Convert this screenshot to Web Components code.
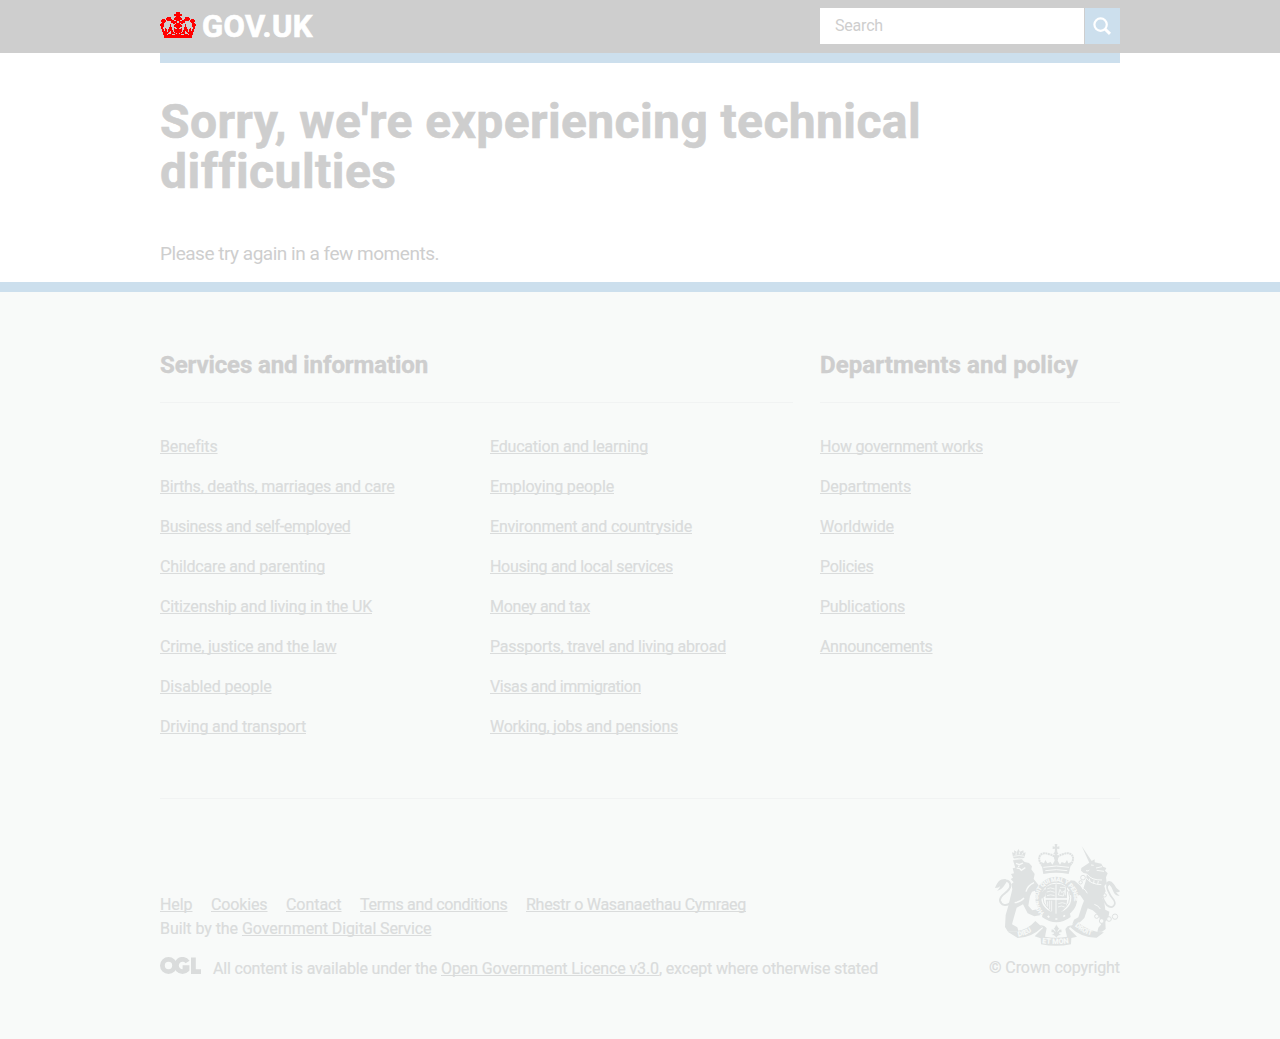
<!DOCTYPE html>
<html lang="en">
<head>
<meta charset="utf-8">
<title>Sorry, we're experiencing technical difficulties - GOV.UK</title>
<style>
body{margin:0;background:#f8faf9;font-family:Roboto,"Liberation Sans",sans-serif;color:#cecece}
</style>
</head>
<body>
<gov-header></gov-header>
<gov-main>
  <text-run slot="title" w="761">Sorry, we're experiencing technical</text-run>
  <text-run slot="title" w="234">difficulties</text-run>
  <text-run slot="body" w="279">Please try again in a few moments.</text-run>
</gov-main>
<gov-footer></gov-footer>

<script>
const make = (name, html, ready) => customElements.define(name, class extends HTMLElement {
  constructor() {
    super();
    this.attachShadow({mode: 'open'}).innerHTML = html.trim();
  }
  connectedCallback() { if (ready) ready.call(this); }
});

make('crown-logo', `
<style>:host{display:block;width:36px;height:27px}svg{display:block}</style>
<svg width="36" height="27" shape-rendering="crispEdges"></svg>`, function () {
  const half = [
    '................##',
    '................##',
    '..............####',
    '..............####',
    '................##',
    '.......####....###',
    '......#####...####',
    '..###.######..####',
    '.#####.#######..##',
    '.#####.....######.',
    '..###......######.',
    '.###.........##.##',
    '####......#....###',
    '####......#...####',
    '.###......#...####',
    '.##......###....##',
    '.##..#...###..#..#',
    '..##.##.####..####',
    '..##.##.#####.####',
    '..#####.##.##.####',
    '...######..###.###',
    '...#####...#####.#',
    '...####.####...###',
    '....##############',
    '....##############',
    '....##############'];
  let d = '';
  half.forEach((row, y) => [...(row + [...row].reverse().join(''))].forEach((c, x) => {
    if (c === '#') d += `M${x} ${y}h1v1h-1z`;
  }));
  this.shadowRoot.querySelector('svg').innerHTML = `<path fill="#f00" d="${d}"/>`;
});

make('search-box', `
<style>
:host{display:flex;width:300px;height:36px}
.field{width:264px;background:#fff;box-sizing:border-box;padding:8px 15px;font-size:16px;line-height:20px;margin-right:1px}
.go{flex:1;background:#ccdfed}
svg{display:block}
</style>
<div class="field"><text-run w="48">Search</text-run></div>
<div class="go"><svg width="35" height="36" fill="none" stroke="#fff"><circle cx="15.6" cy="16.6" r="6.2" stroke-width="2.2"/><path d="M20 21l5 4.8" stroke-width="3"/></svg></div>`);

make('gov-header', `
<style>
:host{display:block;height:53px;background:#cecece}
.in{width:960px;margin:auto;display:flex;justify-content:space-between}
.logo{display:flex;padding-top:12px;gap:6px;color:#fff}
.name{font-size:31px;line-height:30px;font-weight:700;-webkit-text-stroke:.7px #fff}
search-box{margin-top:8px}
</style>
<div class="in"><div class="logo"><crown-logo></crown-logo><span class="name"><text-run w="111">GOV.UK</text-run></span></div><search-box></search-box></div>`);

make('gov-main', `
<style>
:host{display:block;background:#fff;height:229px}
.in{width:960px;margin:auto}
.bar{height:10px;background:#ccdfed}
h1{margin:34px 0 0;font-size:48px;line-height:50px;font-weight:700;-webkit-text-stroke:.6px #cecece;display:flex;flex-direction:column;align-items:flex-start}
p{margin:44px 0 0;font-size:19px;line-height:25px}
</style>
<div class="in"><div class="bar"></div><h1><slot name="title"></slot></h1><p><slot name="body"></slot></p></div>`);

make('link-group', `
<style>
:host{display:block}
h2{margin:0;font-size:24px;line-height:30px;font-weight:700;-webkit-text-stroke:.4px #cecece;padding-bottom:22px;border-bottom:1px solid #f1f3f3}
.cols{display:flex;padding-top:34px}
ul{list-style:none;margin:0;padding:0;flex:none;width:330px;display:flex;flex-direction:column;gap:20px;color:#dadcdc;-webkit-text-stroke:.2px #dadcdc}
li{font-size:16px;line-height:20px}
</style>
<h2></h2><div class="cols"></div>`, function () {
  const groups = {
    services: ['Services and information', 268, [
      [['Benefits', 57], ['Births, deaths, marriages and care', 234.5], ['Business and self-employed', 190.5], ['Childcare and parenting', 165], ['Citizenship and living in the UK', 212], ['Crime, justice and the law', 176.5], ['Disabled people', 111.5], ['Driving and transport', 146]],
      [['Education and learning', 158], ['Employing people', 124], ['Environment and countryside', 202], ['Housing and local services', 183], ['Money and tax', 100], ['Passports, travel and living abroad', 236], ['Visas and immigration', 151], ['Working, jobs and pensions', 188]]]],
    departments: ['Departments and policy', 258, [
      [['How government works', 163], ['Departments', 91], ['Worldwide', 74], ['Policies', 53.5], ['Publications', 85], ['Announcements', 112.5]]]]
  };
  const [title, w, cols] = groups[this.getAttribute('kind')];
  this.shadowRoot.querySelector('h2').innerHTML = `<text-run w="${w}">${title}</text-run>`;
  this.shadowRoot.querySelector('.cols').innerHTML = cols.map(c =>
    `<ul>${c.map(([t, x]) => `<li><text-run link w="${x}">${t}</text-run></li>`).join('')}</ul>`).join('');
});

make('ogl-logo', `
<style>:host{display:block;width:41px;height:17px}svg{display:block}</style>
<svg width="41" height="17" fill="none" stroke="#dadcdc" stroke-width="4.8"><circle cx="8.5" cy="8.5" r="6.1"/><path d="M27.6 5A6.1 6.1 0 1 0 27 12.6V10.6H22.6"/><path d="M33.4 .5V14.6H41"/></svg>`);

make('royal-arms', `
<style>:host{display:block;width:125px;height:102px}svg{display:block;font-family:Roboto,sans-serif;font-weight:700}</style>
<svg width="125" height="102" viewBox="45 27 375 306">
<defs>
<path id="motto-arc" d="M192 233A54 54 0 1 1 268 230"/>
<path id="dieu-arc" d="M115 304Q146 300 172 274"/><path id="mon-arc" d="M186 324Q229 331 272 323"/><path id="droit-arc" d="M284 273Q312 299 350 304"/>
</defs>
<g fill="#dfe2e2" stroke="#dfe2e2" stroke-width="0">
<path d="M224 27h8l-1 8 7-1v8l-7-1 1 10 3 5-7 5-8-5 4-5 1-10-7 1v-8l7 1z"/>
<path fill="none" stroke-width="6" stroke-dasharray="6 1.5" d="M188 93C165 67 184 48 205 57Q222 60 228 72Q235 60 252 57C274 48 291 67 269 93"/>
<path d="M186 95l-3-14 9 4 4-10 6 10 10-4 5 8 7-12-3-15 7-4 8 4-3 15 7 12 5-8 10 4 6-10 4 10 9-4-3 14-5 22q-38-8-76 0z"/>
<path fill="none" stroke="#f8faf9" stroke-width="3" d="M190 97q39-8 77 0M196 107q33-6 66 0"/>
<circle cx="229" cy="188" r="40" fill="none" stroke-width="3"/>
<circle cx="229" cy="188" r="54" fill="none" stroke-width="18"/>
<path d="M197 156q32-20 64 0v35H197z"/><path d="M197 194h64c0 24-12 36-32 44-20-8-32-20-32-44z"/>
<path d="M192 216q37 40 74 0l6 30q-43 32-86 0z"/>
<g fill="none" stroke="#f8faf9" stroke-width="3"><path d="M228 148v88M192 191h74"/><path stroke-width="2.4" d="M202 161q8-5 22 1m-24 9q11-6 24 1m-23 10q10-5 23 0M235 206q12-6 22 0m-23 10q11-6 20 0M235 180l5-17 5 10 9-6-4 16zM203 199v16m6-18v26m6-26v32M240 157h16v24"/><path d="M203 243l5 4m18 5h6m18-7 5-4" stroke-width="5"/></g>
<path d="M99 66l-3-14 7 2-1-8 9 5 4-9 5 8 10-4 1 8 6-2-3 15-7 6H103z"/>
<path fill="none" stroke="#f8faf9" stroke-width="2.5" d="M100 64q18-5 34 0M108 60l1-8m9 6v-8m8 9 3-6M101 72q17-4 31-1"/>
<path d="M101 76l26-3 9 8 13 3 9 10-2 9 10 14-3 15 14 17 3 15 9 7 6-8 6 4-3 16-11 8-17-10-3-14-9 3-6 13-5 29 12 14 18-4 10 8 2 9-24 5-20-9-14-27-19 10-8 28-6 22 16 9 3 11-31 2-9-14 2-36 8-28 12-49-3-16 7-5-9-10 7-4-6-11 9-2-4-15 8-2z" transform="translate(-2 0)"/>
<path fill="none" stroke="#f8faf9" stroke-width="4" d="M108 85l10 4 11-5m-19 16q9-2 14 6l12-8m-20-6v4M162 143q-19 8-24 27M104 203q18-2 28-14"/>
<path fill="none" stroke-width="6" d="M91 204C78 216 63 209 60 197C57 178 91 172 91 152C91 136 74 132 65 142"/>
<path d="M76 132c-18 0-24 10-31 27 8 0 13-2 16-6-3 7-5 10-10 14 15-2 23-16 30-29z"/>
<path d="M305 33l34 51-8 6z"/>
<path d="M336 77l8-4 0 9 20 4 5 9 10 4-4 8 8 8-5 12 2 18-7 8 4 16-11 19 7 14 3 22 12 6-3 20-9 10 1 22-11 8-14 1 3-13 8-9-6-27-19-16-15-6-10 29-13 13-23 5 5-13 13-7 11-35 6-15-12-17-12 4-18-4-4-12 17 3 8-7-17-9-9 3-8-8 9-4 6-10 12 1 17 15 8 12 8-25 4-23-10-2-8-7 1-8 17-11z"/>
<path fill="none" stroke="#f8faf9" stroke-width="3" d="M322 118q12 18 44 17M318 128q13 20 46 21M333 90l8 1m-13 14q-3 5-10 2M348 99l18-4m-16 11 22 3M328 131l2 8m12-3-1 10m14-8-2 10M306 158q12 6 16 17M343 208q12 3 18 14"/>
<path fill="none" stroke-width="5" d="M366 181q5 17 14 29c18 15 29-2 22-14C389 180 371 151 388 141"/>
<path d="M378 144q11-14 24 4 5 12 18 20-3 6-12 3 5 7 11 11-14 2-20-15-5-14-11-18l-6 8z"/>
<g fill="#f8faf9" stroke-width="3"><circle cx="350" cy="244" r="6"/><circle cx="365" cy="258" r="7"/><circle cx="387" cy="252" r="7"/><circle cx="405" cy="245" r="8"/><circle cx="309" cy="128" r="7"/><circle cx="302" cy="142" r="5"/><circle cx="374" cy="181" r="5"/></g>
<path d="M101 289Q140 288 166 258L187 277Q153 309 113 309L83 290z"/>
<path d="M372 292Q330 293 288 258L270 276Q304 309 350 308z"/>
<path d="M164 304l25-25q-2-7-13-5 13-8 24 6l-5 25q32 6 66 0l-5-23q11-16 24-7-11-3-13 6l24 24-17 4-1 19q-45 9-90 0l-1-18z"/>
<path stroke="#f8faf9" stroke-width="2" d="M229 268l9 13-5 8q13-15 13 3l-9 2 7 5-10 4-5 7-5-7-10-4 8-5-9-2q0-18 13-3l-5-8z"/>
</g>
<g fill="#f8faf9" stroke="#f8faf9" stroke-width=".5" font-size="18"><text letter-spacing="-.8"><textPath href="#motto-arc">HONI SOIT QUI MAL Y PENSE</textPath></text>
<text font-size="20"><textPath href="#dieu-arc">DIEU</textPath></text><text font-size="22"><textPath href="#mon-arc">ET MON</textPath></text><text font-size="20"><textPath href="#droit-arc">DROIT</textPath></text></g>
</svg>`);

make('footer-meta', `
<style>
:host{display:flex;justify-content:space-between;align-items:flex-start;font-size:16px;line-height:24px;color:#dadcdc;-webkit-text-stroke:.2px #dadcdc}
.info{padding-top:49px}
.links{display:flex;gap:18.5px}
.row{display:flex;padding-top:16px;gap:12px}
.crest{display:flex;flex-direction:column;align-items:flex-end;gap:10px}
</style>
<div class="info">
<div class="links"><text-run link w="32.5">Help</text-run><text-run link w="56.5">Cookies</text-run><text-run link w="55.5">Contact</text-run><text-run link w="147.5">Terms and conditions</text-run><text-run link w="220">Rhestr o Wasanaethau Cymraeg</text-run></div>
<div><text-run w="78">Built by the</text-run> <text-run link w="189.5">Government Digital Service</text-run></div>
<div class="row"><ogl-logo></ogl-logo><div><text-run w="224">All content is available under the</text-run> <text-run link w="218">Open Government Licence v3.0</text-run><text-run w="219">, except where otherwise stated</text-run></div></div>
</div>
<div class="crest"><royal-arms></royal-arms><text-run w="131">© Crown copyright</text-run></div>`);

make('gov-footer', `
<style>
:host{display:block;border-top:10px solid #ccdfed;height:747px;background:#f8faf9}
.in{width:960px;margin:auto;padding-top:58px}
.top{display:flex;gap:27px;height:448px;border-bottom:1px solid #f1f3f3}
.a{width:633px}.b{width:300px}
footer-meta{padding-top:45px}
</style>
<div class="in"><div class="top"><link-group class="a" kind="services"></link-group><link-group class="b" kind="departments"></link-group></div><footer-meta></footer-meta></div>`);

/* A run of text tracked so that it fills the width given in "w". */
make('text-run', `
<style>
:host{display:inline;white-space:nowrap}
:host([link]) span{text-decoration:underline 1px;text-underline-offset:1px;text-decoration-skip-ink:none}
</style><span><slot></slot></span>`, function () {
  const span = this.shadowRoot.querySelector('span');
  span.style.letterSpacing = '0px';
  const natural = span.getBoundingClientRect().width;
  if (natural) span.style.letterSpacing = (this.getAttribute('w') - natural) / this.textContent.length + 'px';
});
</script>
</body>
</html>
